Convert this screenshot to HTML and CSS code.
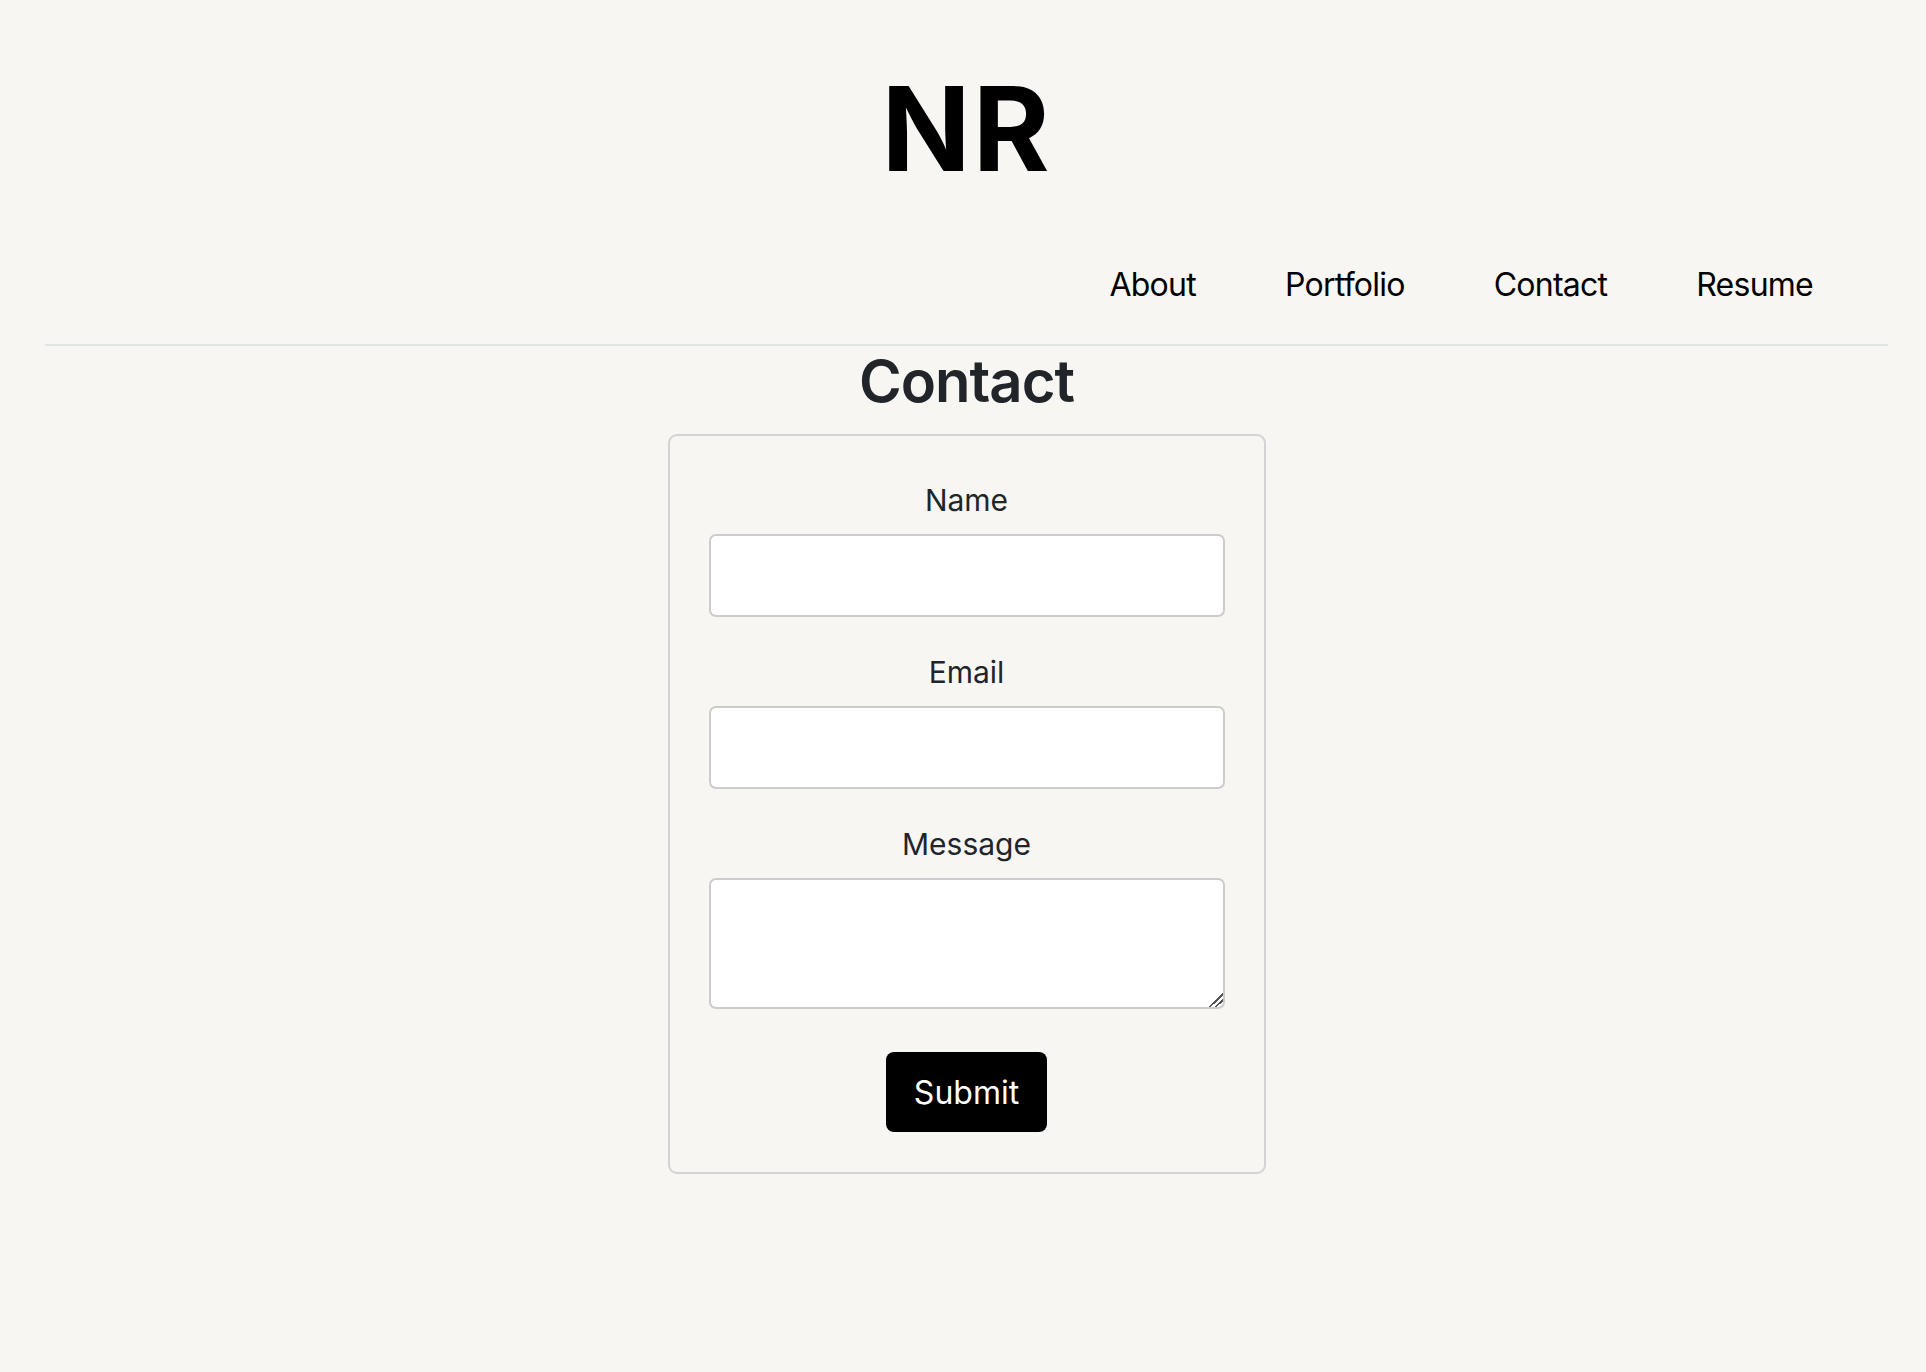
FILE: index.html
```html
<!DOCTYPE html>
<html lang="en">
<head>
<meta charset="utf-8">
<title>Contact</title>
<link rel="stylesheet" href="styles.css">
</head>
<body>
<header class="site-header">
  <div class="logo">NR</div>
  <nav class="nav">
    <a href="#" class="nav-link">About</a>
    <a href="#" class="nav-link">Portfolio</a>
    <a href="#" class="nav-link">Contact</a>
    <a href="#" class="nav-link">Resume</a>
  </nav>
  <div class="divider"></div>
</header>
<main class="main">
  <h1 class="page-title">Contact</h1>
  <form class="contact-card" onsubmit="return false;">
    <div class="field">
      <label class="field-label" for="name">Name</label>
      <input class="field-input" id="name" type="text">
    </div>
    <div class="field">
      <label class="field-label" for="email">Email</label>
      <input class="field-input" id="email" type="email">
    </div>
    <div class="field field-last">
      <label class="field-label" for="message">Message</label>
      <textarea class="field-input field-textarea" id="message"></textarea>
    </div>
    <button class="submit-btn" type="submit">Submit</button>
  </form>
</main>
</body>
</html>
```

FILE: styles.css
```css
* {
  box-sizing: border-box;
}

html, body {
  margin: 0;
  padding: 0;
}

body {
  background: #f7f6f3;
  font-family: Inter, "Liberation Sans", Arial, sans-serif;
  color: #212529;
  min-height: 1372px;
}

.site-header {
  padding: 0 38px 0 45px;
}

.logo {
  margin: 70px 0 0;
  text-align: center;
  font-size: 117px;
  line-height: 117px;
  font-weight: 700;
  color: #000;
  letter-spacing: 2px;
}

.nav {
  margin-top: 74px;
  display: flex;
  justify-content: flex-end;
  gap: 89px;
  padding-right: 75px;
}

.nav-link {
  font-size: 32px;
  line-height: 48px;
  color: #000;
  text-decoration: none;
  font-weight: 400;
  letter-spacing: -0.75px;
}

.divider {
  margin-top: 35px;
  height: 0;
  border-top: 2px solid #e1e3e8;
}

.main {
  padding: 0 38px 0 45px;
  display: flex;
  flex-direction: column;
  align-items: center;
}

.page-title {
  margin: 1px 0 18px;
  font-size: 58px;
  line-height: 69px;
  font-weight: 600;
  color: #212529;
  letter-spacing: -1px;
}

.contact-card {
  width: 598px;
  border: 2px solid #d3d3d3;
  border-radius: 9px;
  padding: 42px 39px 40px;
  display: flex;
  flex-direction: column;
  align-items: center;
}

.field {
  width: 100%;
  display: flex;
  flex-direction: column;
  align-items: center;
  margin-bottom: 33px;
}

.field-last {
  margin-bottom: 43px;
}

.field-label {
  font-size: 30px;
  line-height: 45px;
  margin-bottom: 11px;
  color: #212529;
}

.field-input {
  width: 100%;
  height: 83px;
  background: #fff;
  border: 2px solid #cccccc;
  border-radius: 7px;
  font-family: inherit;
  font-size: 30px;
  padding: 8px 16px;
  margin: 0;
  outline: none;
}

.field-textarea {
  height: 131px;
  display: block;
  resize: vertical;
}

.field-textarea::-webkit-resizer {
  background: linear-gradient(135deg,
    transparent 0 52%, #555 52% 60%, transparent 60% 72%, #555 72% 80%, transparent 80%);
}

.submit-btn {
  width: 161px;
  height: 80px;
  background: #000;
  color: #fff;
  border: none;
  border-radius: 8px;
  font-family: inherit;
  font-size: 32px;
  font-weight: 400;
  padding: 0;
  cursor: pointer;
}
```
